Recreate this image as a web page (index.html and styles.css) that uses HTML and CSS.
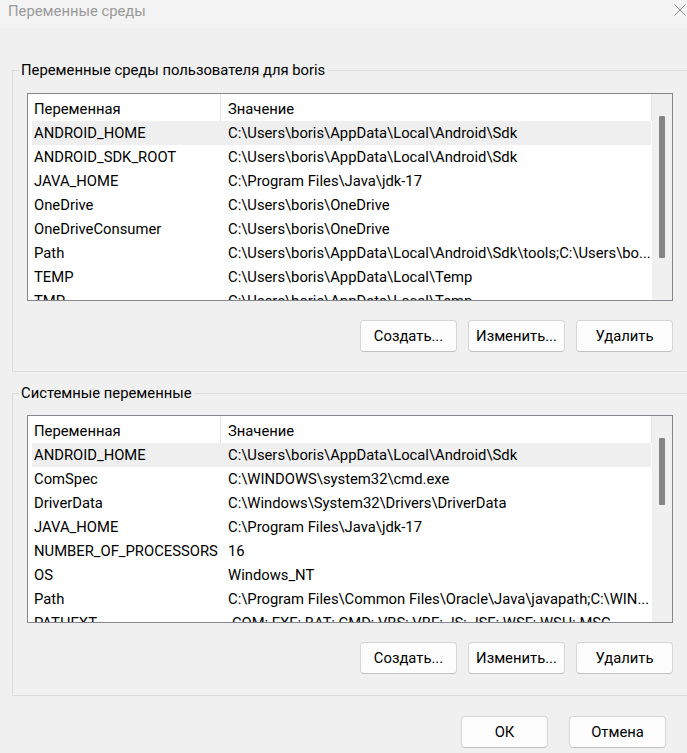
FILE: index.html
```html
<!DOCTYPE html>
<html lang="ru">
<head>
<meta charset="utf-8">
<title>Переменные среды</title>
<link rel="stylesheet" href="styles.css">
</head>
<body>
<div class="window">
  <div class="titlebar">
    <span class="title">Переменные среды</span>
    <svg class="close" width="12" height="12" viewBox="0 0 12 12"><path d="M0.5 0.5L11.5 11.5M11.5 0.5L0.5 11.5" stroke="#8a8a8a" stroke-width="1" fill="none"/></svg>
  </div>
  <div class="main">
    <fieldset class="group group-user">
      <legend>Переменные среды пользователя для boris</legend>
      <div class="pane">
        <div class="list">
          <div class="list-body">
            <div class="list-header">
              <div class="hcell hcell-name">Переменная</div>
              <div class="hcell hcell-value">Значение</div>
            </div>
            <div class="row selected"><div class="cell-name">ANDROID_HOME</div><div class="cell-value">C:\Users\boris\AppData\Local\Android\Sdk</div></div>
            <div class="row"><div class="cell-name">ANDROID_SDK_ROOT</div><div class="cell-value">C:\Users\boris\AppData\Local\Android\Sdk</div></div>
            <div class="row"><div class="cell-name">JAVA_HOME</div><div class="cell-value">C:\Program Files\Java\jdk-17</div></div>
            <div class="row"><div class="cell-name">OneDrive</div><div class="cell-value">C:\Users\boris\OneDrive</div></div>
            <div class="row"><div class="cell-name">OneDriveConsumer</div><div class="cell-value">C:\Users\boris\OneDrive</div></div>
            <div class="row"><div class="cell-name">Path</div><div class="cell-value">C:\Users\boris\AppData\Local\Android\Sdk\tools;C:\Users\bo...</div></div>
            <div class="row"><div class="cell-name">TEMP</div><div class="cell-value">C:\Users\boris\AppData\Local\Temp</div></div>
            <div class="row"><div class="cell-name">TMP</div><div class="cell-value">C:\Users\boris\AppData\Local\Temp</div></div>
          </div>
          <div class="scrollbar"><div class="thumb thumb-user"></div></div>
        </div>
        <div class="buttons">
          <button class="btn">Создать...</button>
          <button class="btn">Изменить...</button>
          <button class="btn">Удалить</button>
        </div>
      </div>
    </fieldset>
    <fieldset class="group group-system">
      <legend>Системные переменные</legend>
      <div class="pane">
        <div class="list">
          <div class="list-body">
            <div class="list-header">
              <div class="hcell hcell-name">Переменная</div>
              <div class="hcell hcell-value">Значение</div>
            </div>
            <div class="row selected"><div class="cell-name">ANDROID_HOME</div><div class="cell-value">C:\Users\boris\AppData\Local\Android\Sdk</div></div>
            <div class="row"><div class="cell-name">ComSpec</div><div class="cell-value">C:\WINDOWS\system32\cmd.exe</div></div>
            <div class="row"><div class="cell-name">DriverData</div><div class="cell-value">C:\Windows\System32\Drivers\DriverData</div></div>
            <div class="row"><div class="cell-name">JAVA_HOME</div><div class="cell-value">C:\Program Files\Java\jdk-17</div></div>
            <div class="row"><div class="cell-name">NUMBER_OF_PROCESSORS</div><div class="cell-value">16</div></div>
            <div class="row"><div class="cell-name">OS</div><div class="cell-value">Windows_NT</div></div>
            <div class="row"><div class="cell-name">Path</div><div class="cell-value">C:\Program Files\Common Files\Oracle\Java\javapath;C:\WIN...</div></div>
            <div class="row"><div class="cell-name">PATHEXT</div><div class="cell-value">.COM;.EXE;.BAT;.CMD;.VBS;.VBE;.JS;.JSE;.WSF;.WSH;.MSC</div></div>
          </div>
          <div class="scrollbar"><div class="thumb thumb-system"></div></div>
        </div>
        <div class="buttons">
          <button class="btn">Создать...</button>
          <button class="btn">Изменить...</button>
          <button class="btn">Удалить</button>
        </div>
      </div>
    </fieldset>
    <div class="footer">
      <button class="btn btn-ok">ОК</button>
      <button class="btn">Отмена</button>
    </div>
  </div>
</div>
</body>
</html>
```
FILE: styles.css
```css
html, body {
  margin: 0;
  padding: 0;
}
body {
  width: 687px;
  height: 753px;
  overflow: hidden;
  background: #f0f0f0;
  font-family: Roboto, "Liberation Sans", Arial, sans-serif;
  font-size: 14.8px;
  color: #000;
}
.window {
  width: 687px;
  height: 753px;
  overflow: hidden;
}
.titlebar {
  height: 28px;
  background: #f3f3f3;
  display: flex;
  align-items: center;
  justify-content: space-between;
  padding: 0 1px 0 8px;
  box-sizing: border-box;
}
.title {
  font-size: 14.8px;
  color: #9a9a9a;
  margin-top: -6px;
}
.close {
  margin-top: -9px;
}
.main {
  padding-left: 12px;
}
.group {
  margin: 0 -30px 0 0;
  padding: 15px 0 19px 14px;
  border: 1px solid #dcdcdc;
  min-width: 0;
}
.group-user {
  margin-top: 34px;
}
.group-system {
  margin-top: 13px;
  padding-top: 14px;
  padding-bottom: 21px;
}
.group legend {
  padding: 0 2px;
  margin-left: -8px;
  line-height: 16px;
  font-size: 14.8px;
}
.pane {
  width: 646px;
}
.list {
  width: 646px;
  height: 208px;
  box-sizing: border-box;
  border: 1px solid #85878f;
  background: #fff;
  display: flex;
}
.list-body {
  flex: 1;
  overflow: hidden;
}
.list-header {
  height: 27px;
  display: flex;
}
.hcell {
  height: 27px;
  line-height: 27px;
  padding-top: 2px;
  box-sizing: border-box;
  border-right: 1px solid #e5e5e5;
  white-space: nowrap;
}
.hcell-name {
  width: 193px;
  padding-left: 6px;
}
.hcell-value {
  flex: 1;
  padding-left: 7px;
}
.row {
  height: 24px;
  line-height: 24px;
  margin: 0 1px 0 4px;
  display: flex;
  white-space: nowrap;
}
.row.selected {
  background: #efefef;
}
.cell-name {
  width: 188px;
  padding-left: 2px;
  box-sizing: border-box;
  overflow: hidden;
}
.cell-value {
  flex: 1;
  padding-left: 8px;
  overflow: hidden;
}
.scrollbar {
  width: 20px;
  background: #f0f0f0;
  display: flex;
  flex-direction: column;
}
.thumb {
  width: 6px;
  margin-left: 7px;
  margin-top: 22px;
  background: #858585;
  border-radius: 1px;
}
.thumb-user {
  height: 142px;
}
.thumb-system {
  height: 67px;
}
.buttons {
  display: flex;
  justify-content: flex-end;
  gap: 11px;
  margin-top: 19px;
}
.btn {
  width: 97px;
  height: 32px;
  box-sizing: border-box;
  background: #fdfdfd;
  border: 1px solid #d5d5d5;
  border-bottom-color: #c2c2c2;
  border-radius: 4px;
  font-family: Roboto, "Liberation Sans", Arial, sans-serif;
  font-size: 14.8px;
  color: #000;
  padding: 0;
}
.footer {
  display: flex;
  justify-content: flex-end;
  gap: 21px;
  padding-right: 21px;
  margin-top: 20px;
}
.btn-ok {
  width: 87px;
}
```
